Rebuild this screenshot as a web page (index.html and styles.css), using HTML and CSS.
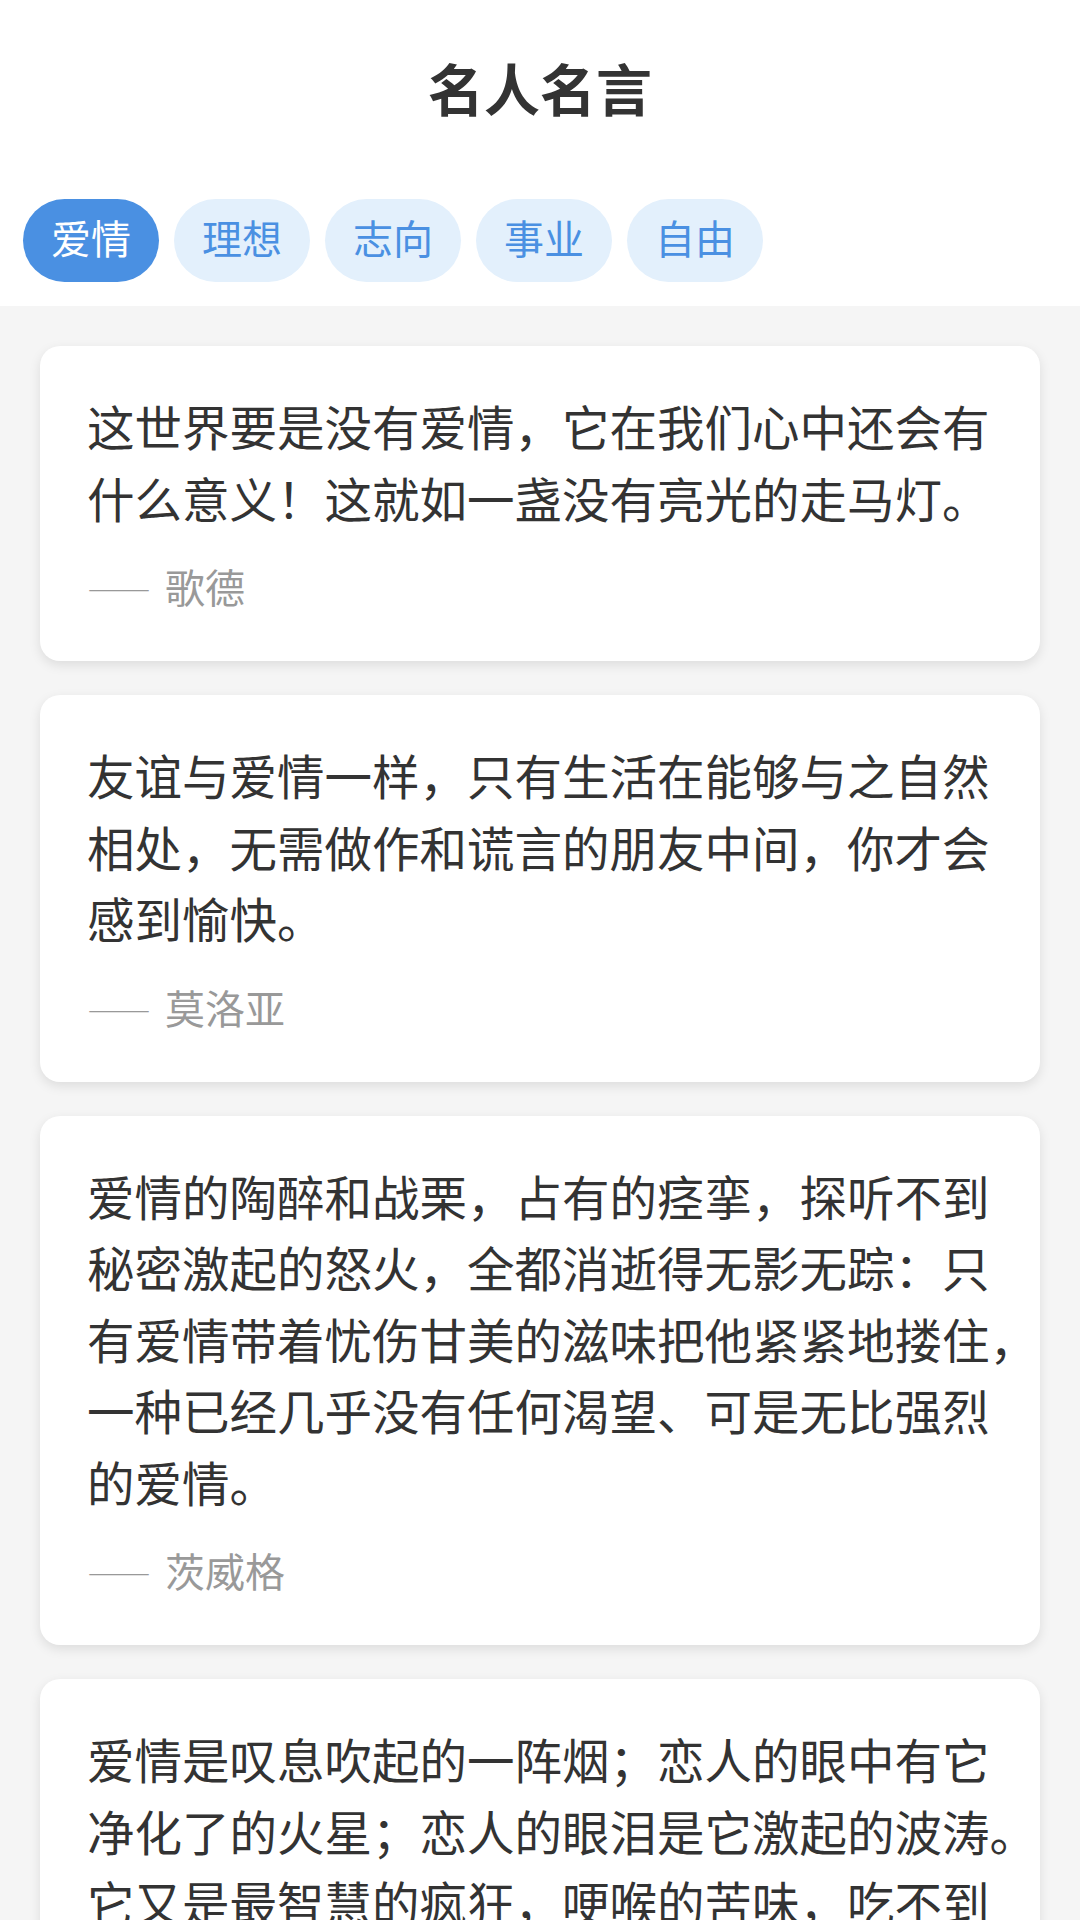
FILE: index.html
```html
<!DOCTYPE html>
<html lang="zh-CN">
<head>
<meta charset="utf-8">
<title>名人名言</title>
<link rel="stylesheet" href="styles.css">
</head>
<body>
<div class="app">
  <header class="header">
    <h1 class="title">名人名言</h1>
    <nav class="tabs">
      <span class="tab active">爱情</span>
      <span class="tab">理想</span>
      <span class="tab">志向</span>
      <span class="tab">事业</span>
      <span class="tab">自由</span>
    </nav>
  </header>
  <main class="list">
    <article class="card">
      <p class="quote">这世界要是没有爱情，它在我们心中还会有什么意义！这就如一盏没有亮光的走马灯。</p>
      <p class="author"><span class="dash">——</span> 歌德</p>
    </article>
    <article class="card">
      <p class="quote">友谊与爱情一样，只有生活在能够与之自然相处，无需做作和谎言的朋友中间，你才会感到愉快。</p>
      <p class="author"><span class="dash">——</span> 莫洛亚</p>
    </article>
    <article class="card">
      <p class="quote">爱情的陶醉和战栗，占有的痉挛，探听不到秘密激起的怒火，全都消逝得无影无踪：只有爱情带着忧伤甘美的滋味把他紧紧地搂住<span class="hang">，</span>一种已经几乎没有任何渴望、可是无比强烈的爱情。</p>
      <p class="author"><span class="dash">——</span> 茨威格</p>
    </article>
    <article class="card">
      <p class="quote">爱情是叹息吹起的一阵烟；恋人的眼中有它净化了的火星；恋人的眼泪是它激起的波涛<span class="hang">。</span>它又是最智慧的疯狂，哽喉的苦味，吃不到的蜜糖。</p>
      <p class="author"><span class="dash">——</span> 莎士比亚</p>
    </article>
  </main>
</div>
</body>
</html>
```

FILE: styles.css
```css
* {
  box-sizing: border-box;
}

html, body {
  margin: 0;
  padding: 0;
}

body {
  width: 1080px;
  height: 1920px;
  overflow: hidden;
  background: #f5f5f5;
  font-family: Roboto, "Noto Sans CJK SC", sans-serif;
  color: #333333;
}

.app {
  display: flex;
  flex-direction: column;
}

.header {
  background: #ffffff;
  padding: 50px 0 24px 23px;
  display: flex;
  flex-direction: column;
}

.title {
  margin: 0 0 0 -23px;
  font-size: 56px;
  line-height: 84px;
  font-weight: 700;
  text-align: center;
  color: #333333;
}

.tabs {
  display: flex;
  gap: 15px;
  margin-top: 65px;
}

.tab {
  display: block;
  height: 83px;
  line-height: 83px;
  padding: 0 28px;
  border-radius: 42px;
  font-size: 40px;
  background: #e3f0fc;
  color: #4a90e2;
}

.tab.active {
  background: #4a90e2;
  color: #ffffff;
}

.list {
  padding: 40px 40px;
  display: flex;
  flex-direction: column;
  gap: 34px;
}

.card {
  background: #ffffff;
  border-radius: 20px;
  padding: 44px 13px 43px 47px;
  box-shadow: 0 4px 12px rgba(0, 0, 0, 0.10);
}

.quote {
  margin: 0;
  font-family: "Noto Sans CJK SC", sans-serif;
  font-size: 47.5px;
  line-height: 71.5px;
  color: #333333;
}

/* line-end punctuation set half-width, as the reference's text engine does */
.hang {
  font-feature-settings: "halt" 1;
}

.author {
  margin: 28px 0 0 0;
  font-size: 40px;
  line-height: 56px;
  color: #999999;
}

.dash {
  font-family: "Noto Sans CJK SC", sans-serif;
  font-size: 32px;
  margin-right: 4px;
}
```
